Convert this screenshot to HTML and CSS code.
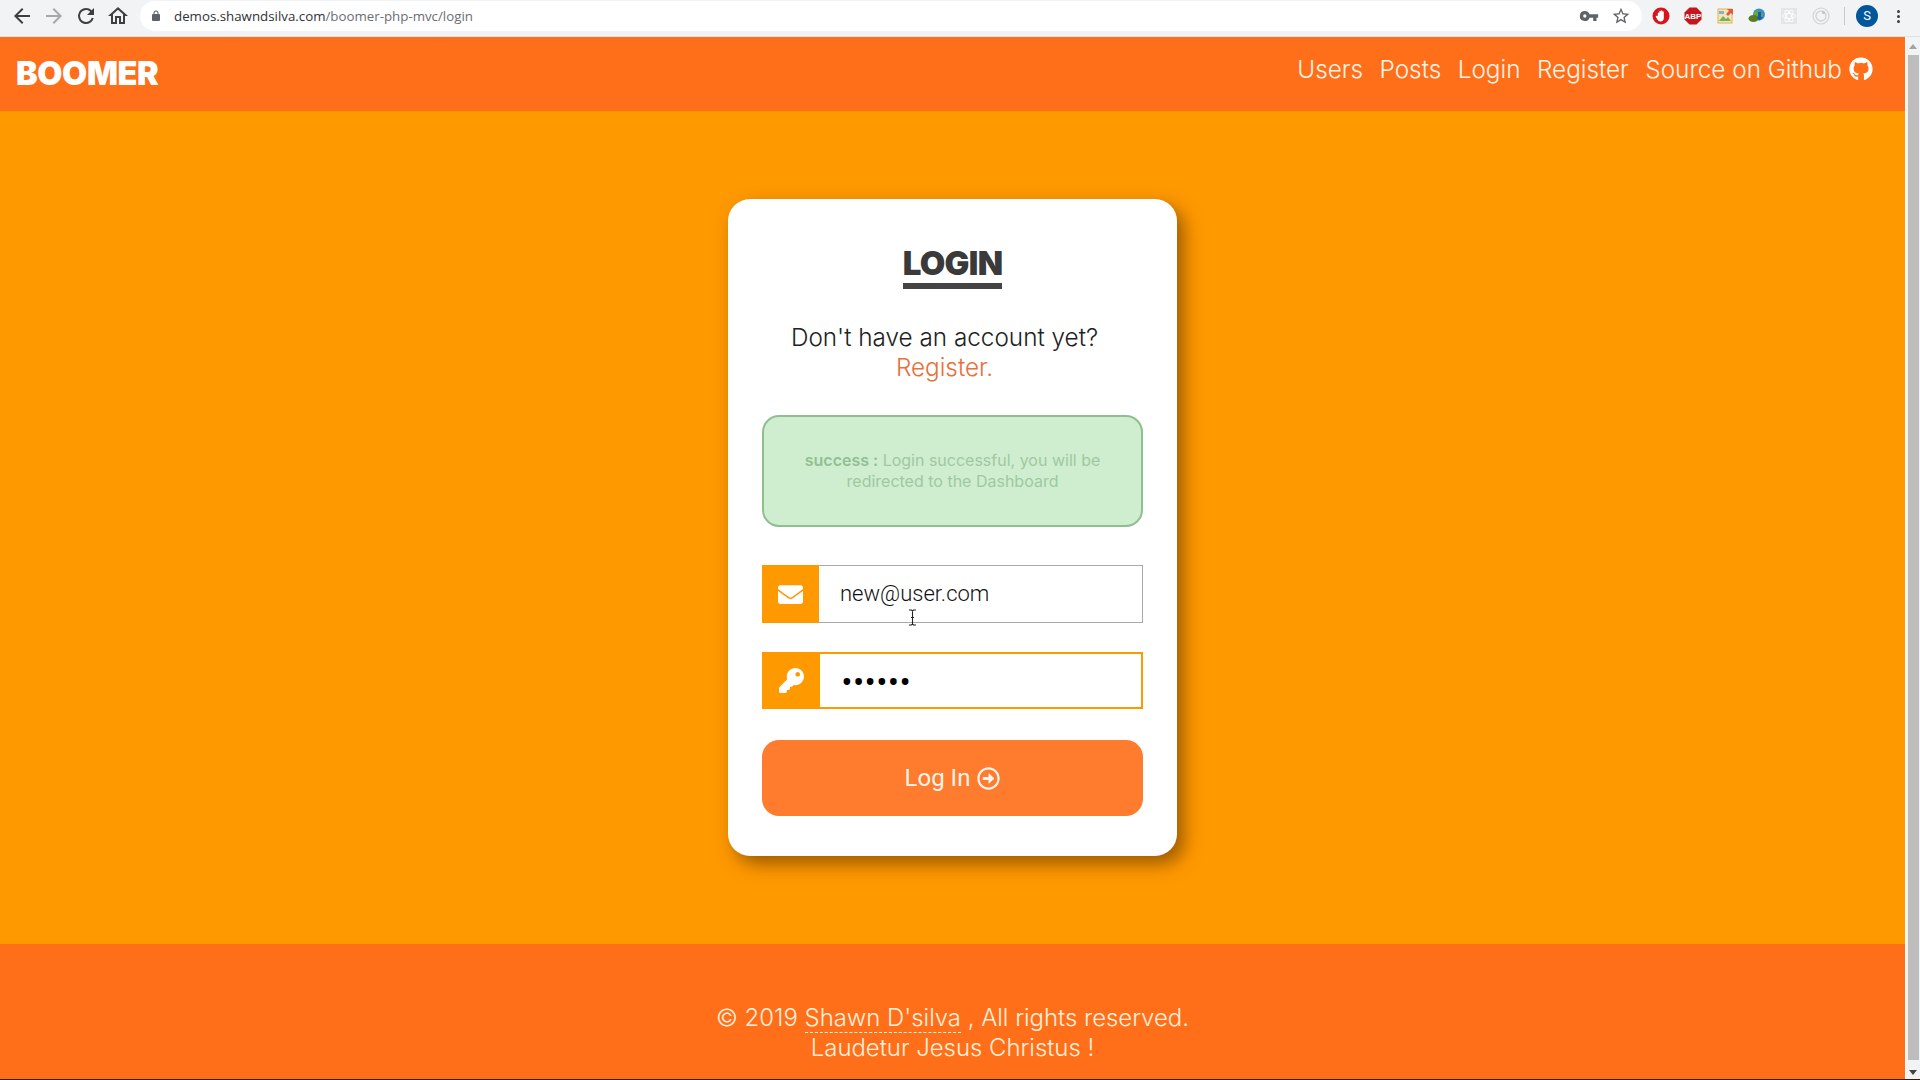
FILE: index.html
```html
<!DOCTYPE html>
<html>
<head>
    <title>Boomer - Login</title>
    <link rel="stylesheet" href="styles.css">
</head>
<body>

<div class="browser-bar">
    <div class="nav-btns">
        <svg class="bar-icon" viewBox="0 0 24 24"><path d="M20 11H7.8l5.6-5.6L12 4l-8 8 8 8 1.4-1.4L7.8 13H20z" fill="#3c4043"/></svg>
        <svg class="bar-icon" viewBox="0 0 24 24"><path d="M4 11h12.2l-5.6-5.6L12 4l8 8-8 8-1.4-1.4 5.6-5.6H4z" fill="#a5a8ab"/></svg>
        <svg class="bar-icon" viewBox="0 0 24 24"><path d="M17.65 6.35A7.96 7.96 0 0 0 12 4a8 8 0 1 0 7.73 10h-2.08A6 6 0 1 1 12 6c1.66 0 3.14.69 4.22 1.78L13 11h7V4z" fill="#3c4043"/></svg>
        <svg class="bar-icon" viewBox="0 0 24 24"><path d="M12 5.7l5 4.5V18h-2v-6H9v6H7v-7.8zM12 3L2 12h3v8h6v-6h2v6h6v-8h3z" fill="#3c4043"/></svg>
    </div>
    <div class="url-pill">
        <svg class="lock" viewBox="0 0 24 24"><path d="M18 8h-1V6a5 5 0 0 0-10 0v2H6a2 2 0 0 0-2 2v10c0 1.100.9 2 2 2h12a2 2 0 0 0 2-2V10a2 2 0 0 0-2-2zM9 6a3 3 0 0 1 6 0v2H9z" fill="#5f6368"/></svg>
        <span class="url"><span class="url-host">demos.shawndsilva.com</span>/boomer-php-mvc/login</span>
        <span class="spacer"></span>
        <svg class="bar-icon pill-icon" viewBox="0 0 24 24"><path d="M12.650 10A6 6 0 0 0 7 6a6 6 0 1 0 5.650 8H17v4h4v-4h2v-4zM7 14a2 2 0 1 1 0-4 2 2 0 0 1 0 4z" fill="#5f6368"/></svg>
        <svg class="bar-icon pill-icon" viewBox="0 0 24 24"><path d="M22 9.240l-7.190-.62L12 2 9.190 8.630 2 9.240l5.460 4.730L5.820 21 12 17.270 18.180 21l-1.630-7.030zM12 15.400l-3.760 2.270 1-4.280-3.320-2.880 4.380-.38L12 6.100l1.710 4.040 4.380.38-3.320 2.880 1 4.280z" fill="#5f6368"/></svg>
    </div>
    <div class="ext-btns">
        <svg class="ext" viewBox="0 0 18 18"><circle cx="9" cy="9" r="8.500" fill="#d6161c"/><path d="M5.800 9.500V6a.8.8 0 0 1 1.500 0V4.200a.8.8 0 0 1 1.500 0V3.800a.8.8 0 0 1 1.500 0v1a.8.8 0 0 1 1.500.2v6c0 2-1.300 3.500-3.200 3.500-1.600 0-2.500-.8-3.200-2L3.900 10c-.5-.9.800-1.700 1.500-.9z" fill="#fff"/></svg>
        <svg class="ext" viewBox="0 0 18 18"><path d="M5.500.5h7l5 5v7l-5 5h-7l-5-5v-7z" fill="#c4161c"/><text class="abp" x="9" y="12" text-anchor="middle">ABP</text></svg>
        <svg class="ext" viewBox="0 0 18 18"><rect x="2" y="2" width="14" height="14" fill="#f7e6b0" stroke="#e8b24a"/><path d="M3 14l4-5 3 3 2-2 3 4z" fill="#6fb36a"/><path d="M11 2h6v6l-2-2-3 3-2-2 3-3z" fill="#e2574c"/><rect x="3" y="4" width="5" height="3" fill="#79b4e8"/></svg>
        <svg class="ext" viewBox="0 0 18 18"><circle cx="11" cy="7.500" r="6" fill="#3d8dd0"/><path d="M6 5c3-2 7-1 9 3-2 3-6 4-9 3z" fill="#5dae3c"/><ellipse cx="5.500" cy="11.500" rx="5" ry="3.500" fill="#5a7d22"/><path d="M10 5h3v5h2l-3.500 3.500L8 10h2z" fill="#1c5aa0"/></svg>
        <svg class="ext ext-faded" viewBox="0 0 18 18"><rect width="16" height="16" x="1" y="1" fill="#e3e4e5"/><ellipse cx="9" cy="9" rx="6.500" ry="2.500" fill="none" stroke="#fff"/><ellipse cx="9" cy="9" rx="6.500" ry="2.500" fill="none" stroke="#fff" transform="rotate(60 9 9)"/><ellipse cx="9" cy="9" rx="6.500" ry="2.500" fill="none" stroke="#fff" transform="rotate(120 9 9)"/></svg>
        <svg class="ext ext-faded" viewBox="0 0 18 18"><circle cx="9" cy="9" r="8" fill="#f1f3f4" stroke="#cfd1d2" stroke-width="1.200"/><circle cx="9" cy="9" r="5" fill="none" stroke="#cfd1d2" stroke-width="1.400"/><circle cx="11.500" cy="5.500" r="1.500" fill="#bcbec0"/></svg>
    </div>
    <div class="bar-divider"></div>
    <div class="avatar">S</div>
    <div class="menu-dots"><i></i><i></i><i></i></div>
</div>

<div class="viewport">
    <div class="page">
        <nav class="navbar">
            <a class="brand">BOOMER</a>
            <div class="nav-links">
                <a>Users</a>
                <a>Posts</a>
                <a>Login</a>
                <a>Register</a>
                <a class="github-link">Source on Github
                    <svg class="github" viewBox="0 0 496 512"><path d="M244.800 8C106.100 8 0 113.300 0 252c0 110.900 69.800 205.800 169.500 239.200 12.800 2.300 17.300-5.600 17.300-12.100 0-6.200-.3-40.400-.3-61.400 0 0-70 15-84.700-29.800 0 0-11.400-29.100-27.800-36.600 0 0-22.900-15.700 1.600-15.400 0 0 24.900 2 38.600 25.800 21.900 38.600 58.600 27.500 72.900 20.900 2.300-16 8.800-27.100 16-33.700-55.900-6.200-112.300-14.300-112.300-110.500 0-27.500 7.600-41.300 23.600-58.900-2.600-6.500-11.100-33.300 2.600-67.900 20.900-6.500 69 27 69 27 20-5.600 41.500-8.500 62.800-8.500s42.800 2.900 62.800 8.500c0 0 48.100-33.600 69-27 13.700 34.700 5.200 61.400 2.600 67.900 16 17.700 25.800 31.500 25.800 58.900 0 96.500-58.900 104.200-114.800 110.500 9.200 7.900 17 22.900 17 46.400 0 33.700-.3 75.400-.3 83.600 0 6.500 4.600 14.400 17.300 12.100C428.200 457.800 496 362.900 496 252 496 113.300 383.500 8 244.800 8z" fill="currentColor"/></svg>
                </a>
            </div>
        </nav>

        <main class="main">
            <div class="card">
                <div class="card-title"><h1>LOGIN</h1></div>
                <p class="card-sub">Don't have an account yet?<br><a>Register.</a></p>
                <div class="alert"><b>success :</b> Login successful, you will be<br>redirected to the Dashboard</div>
                <div class="field">
                    <span class="field-icon">
                        <svg viewBox="0 0 512 512"><path d="M502.300 190.800c3.900-3.100 9.700-.2 9.700 4.700V400c0 26.500-21.500 48-48 48H48c-26.500 0-48-21.500-48-48V195.600c0-5 5.700-7.800 9.700-4.700 22.400 17.400 52.100 39.500 154.100 113.600 21.100 15.400 56.700 47.800 92.200 47.600 35.700.3 72-32.800 92.300-47.600 102-74.100 131.600-96.300 154-113.700zM256 320c23.200.4 56.600-29.200 73.400-41.400 132.700-96.300 142.800-104.700 173.400-128.700 5.800-4.500 9.200-11.500 9.200-18.900v-19c0-26.500-21.500-48-48-48H48C21.500 64 0 85.500 0 112v19c0 7.400 3.400 14.300 9.200 18.900 30.600 23.900 40.700 32.400 173.400 128.700 16.800 12.200 50.200 41.800 73.400 41.400z" fill="currentColor"/></svg>
                    </span>
                    <input class="field-input" type="text" value="new@user.com">
                    <svg class="ibeam" viewBox="0 0 9 17"><path d="M1 1h2.500l1 1 1-1H8M4.500 2v13M1 16h2.500l1-1 1 1H8M3 8.500h3" fill="none" stroke="#222" stroke-width="1.100"/></svg>
                </div>
                <div class="field field-focus">
                    <span class="field-icon">
                        <svg viewBox="0 0 512 512"><path d="M512 176.001C512 273.203 433.202 352 336 352c-11.220 0-22.190-1.062-32.827-3.069l-24.012 27.014A23.999 23.999 0 0 1 261.223 384H224v40c0 13.255-10.745 24-24 24h-40v40c0 13.255-10.745 24-24 24H24c-13.255 0-24-10.745-24-24v-78.059c0-6.365 2.529-12.470 7.029-16.971l161.802-161.802C163.108 213.814 160 195.271 160 176 160 78.798 238.797.001 335.999 0 433.488-.001 512 78.511 512 176.001zM336 128c0 26.510 21.490 48 48 48s48-21.490 48-48-21.490-48-48-48-48 21.490-48 48z" fill="currentColor"/></svg>
                    </span>
                    <input class="field-input" type="password" value="123456">
                </div>
                <button class="login-btn">Log In
                    <svg viewBox="0 0 512 512"><path d="M504 256C504 119 393 8 256 8S8 119 8 256s111 248 248 248 248-111 248-248zm-448 0c0-110.500 89.500-200 200-200s200 89.500 200 200-89.500 200-200 200S56 366.500 56 256zm72 20v-40c0-6.600 5.400-12 12-12h116v-67c0-10.700 12.900-16 20.500-8.500l99 99c4.700 4.700 4.700 12.300 0 17l-99 99c-7.600 7.600-20.500 2.200-20.500-8.500v-67H140c-6.600 0-12-5.400-12-12z" fill="currentColor"/></svg>
                </button>
            </div>
        </main>

        <footer class="footer">
            <div>&copy; 2019 <a>Shawn D'silva</a> , All rights reserved.</div>
            <div>Laudetur Jesus Christus !</div>
        </footer>
    </div>

    <div class="scrollbar">
        <span class="arrow-up"></span>
        <span class="thumb"></span>
        <span class="arrow-down"></span>
    </div>
</div>
<div class="bottom-line"></div>

</body>
</html>
```

FILE: styles.css
```css
html, body {
    margin: 0;
    padding: 0;
    height: 100%;
    overflow: hidden;
}

body {
    display: flex;
    flex-direction: column;
    font-family: Inter, "Liberation Sans", sans-serif;
    background: #ff9900;
}

/* browser chrome */
.browser-bar {
    display: flex;
    align-items: center;
    height: 37px;
    box-sizing: border-box;
    padding: 0 0 4px 10px;
    background: #f1f3f5;
    border-bottom: 1px solid #dfe1e5;
}

.nav-btns {
    display: flex;
    gap: 8px;
}

.bar-icon {
    width: 24px;
    height: 24px;
    display: block;
}

.url-pill {
    display: flex;
    align-items: center;
    width: 1502px;
    height: 30px;
    margin-left: 10px;
    padding: 0 11px 0 10px;
    box-sizing: border-box;
    background: #fff;
    border-radius: 15px;
}

.lock {
    width: 12px;
    height: 12px;
    margin-right: 12px;
}

.url {
    font-family: "Open Sans", sans-serif;
    font-size: 13.300px;
    color: #6a6e72;
}

.url-host {
    color: #2f3235;
}

.spacer {
    flex: 1;
}

.pill-icon {
    width: 20px;
    height: 20px;
    margin-left: 12px;
}

.ext-btns {
    display: flex;
    gap: 14px;
    margin-left: 10px;
}

.ext {
    width: 18px;
    height: 18px;
    display: block;
}

.ext-faded {
    opacity: .9;
}

.abp {
    font-family: "Liberation Sans", sans-serif;
    font-size: 8px;
    font-weight: bold;
    fill: #fff;
}

.bar-divider {
    width: 1px;
    height: 18px;
    margin-left: 14px;
    background: #c8cacc;
}

.avatar {
    width: 22px;
    height: 22px;
    margin-left: 11px;
    border-radius: 50%;
    background: #01579b;
    color: #fff;
    font-family: Roboto, sans-serif;
    font-size: 13px;
    line-height: 22px;
    text-align: center;
}

.menu-dots {
    display: flex;
    flex-direction: column;
    gap: 2px;
    margin-left: 19px;
}

.menu-dots i {
    display: block;
    width: 3px;
    height: 3px;
    border-radius: 50%;
    background: #3c4043;
}

/* page */
.viewport {
    flex: 1;
    display: flex;
    min-height: 0;
}

.page {
    flex: 1;
    display: flex;
    flex-direction: column;
    min-width: 0;
}

.navbar {
    display: flex;
    justify-content: space-between;
    align-items: center;
    height: 74px;
    padding: 0 32px 0 16px;
    background: #ff6f1a;
    color: #fff;
}

.brand {
    font-size: 32.500px;
    font-weight: 900;
    letter-spacing: -.4px;
    padding-bottom: 2px;
}

.nav-links {
    display: flex;
    gap: 16.500px;
    font-size: 24.300px;
    font-weight: 300;
    padding-bottom: 10px;
    color: #fff3e6;
}

.github-link {
    display: flex;
    align-items: center;
    gap: 7px;
}

.github {
    width: 24px;
    height: 24px;
    color: #fff;
}

.main {
    flex: 1;
    display: flex;
    justify-content: center;
    align-items: center;
}

.card {
    width: 449px;
    height: 657px;
    box-sizing: border-box;
    padding: 44px 34px 0;
    background: #fff;
    border-radius: 22px;
    box-shadow: 7px 8px 18px rgba(90, 50, 0, .6);
}

.card-title {
    text-align: center;
}

.card-title h1 {
    display: inline-block;
    margin: 0;
    font-size: 33px;
    font-weight: 900;
    line-height: 40px;
    letter-spacing: -.7px;
    color: #3a3a3a;
    border-bottom: 6px solid #444;
}

.card-sub {
    margin: 33px 16px 0 0;
    font-size: 24.300px;
    font-weight: 300;
    line-height: 30px;
    text-align: center;
    color: #222;
}

.card-sub a {
    color: #e8703a;
}

.alert {
    height: 112px;
    box-sizing: border-box;
    margin-top: 33px;
    padding: 33px 30px 0;
    background: #cfeecf;
    border: 2px solid #8fbf8f;
    border-radius: 17px;
    font-size: 16px;
    line-height: 21px;
    text-align: center;
    color: #a0c8a2;
}

.alert b {
    font-weight: 600;
    color: #93bf95;
}

.field {
    position: relative;
    display: flex;
    height: 58px;
    margin-top: 38px;
    box-sizing: border-box;
}

.field + .field {
    margin-top: 29px;
    height: 57px;
}

.field-icon {
    display: flex;
    align-items: center;
    justify-content: center;
    width: 57px;
    background: #ff9900;
    color: #fff;
}

.field-icon svg {
    width: 25px;
    height: 25px;
}

.field-input {
    flex: 1;
    min-width: 0;
    padding: 0 0 2px 21px;
    border: 1px solid #aaa;
    border-left: 0;
    outline: 0;
    font-family: Roboto, sans-serif;
    font-size: 22px;
    font-weight: 300;
    color: #111;
    background: #fff;
}

.field-focus .field-icon {
    width: 58px;
}

.field-focus .field-input {
    padding: 5px 0 0 21px;
    border: 2px solid #ff9900;
    border-left: 0;
    font-size: 36px;
    color: #000;
}

.ibeam {
    position: absolute;
    left: 146px;
    top: 44px;
    width: 9px;
    height: 17px;
}

.login-btn {
    display: flex;
    align-items: center;
    justify-content: center;
    gap: 7px;
    width: 100%;
    height: 76px;
    margin-top: 31px;
    border: 0;
    border-radius: 17px;
    background: #ff7b2e;
    color: #fff5ec;
    font-family: Roboto, sans-serif;
    font-size: 24px;
}

.login-btn svg {
    width: 23px;
    height: 23px;
}

.footer {
    height: 135px;
    box-sizing: border-box;
    padding-top: 59px;
    background: #ff6f1a;
    font-size: 23.900px;
    font-weight: 300;
    line-height: 30px;
    text-align: center;
    color: #fff0dc;
}

.footer a {
    border-bottom: 1px dashed #fff0dc;
}

/* scrollbar */
.scrollbar {
    display: flex;
    flex-direction: column;
    align-items: center;
    width: 15px;
    padding: 7px 0 4px;
    box-sizing: border-box;
    background: #f1f3f5;
    border-left: 1px solid #fff;
}

.arrow-up {
    width: 0;
    height: 0;
    border-left: 4px solid transparent;
    border-right: 4px solid transparent;
    border-bottom: 5px solid #a3a3a3;
}

.thumb {
    flex: 1;
    width: 11px;
    margin: 6px 0 10px;
    background: #bdbdbd;
}

.arrow-down {
    width: 0;
    height: 0;
    border-left: 4px solid transparent;
    border-right: 4px solid transparent;
    border-top: 5px solid #444;
}

.bottom-line {
    height: 1px;
    background: #3a1a08;
}
```
